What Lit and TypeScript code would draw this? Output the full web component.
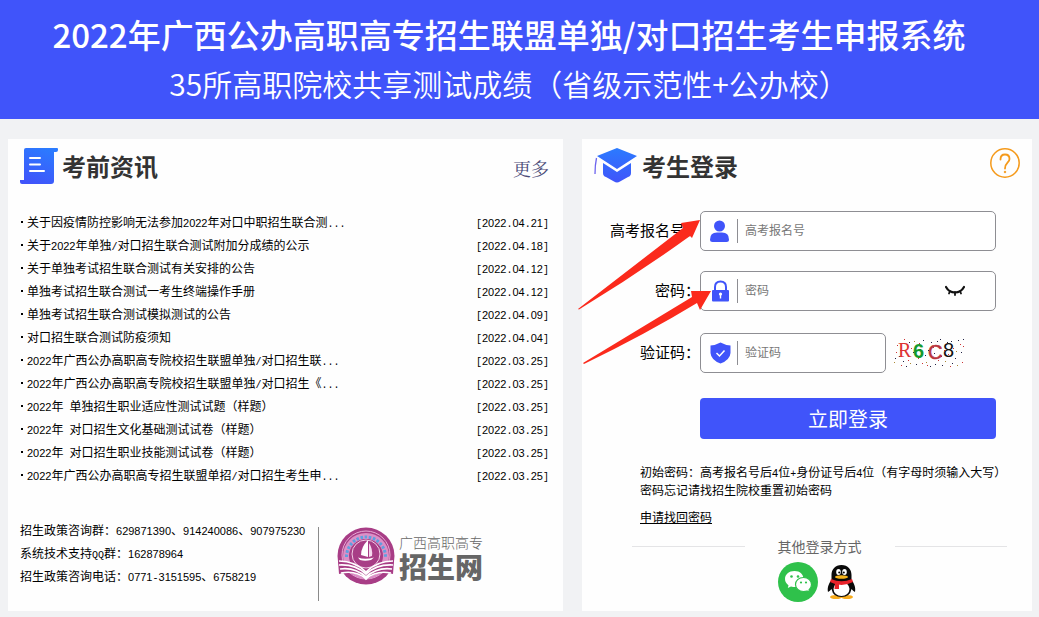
import { LitElement, html, css, svg } from "lit";
import { customElement, property } from "lit/decorators.js";

const NEWS: [string, string][] = [
  ["关于因疫情防控影响无法参加2022年对口中职招生联合测...", "2022.04.21"],
  ["关于2022年单独/对口招生联合测试附加分成绩的公示", "2022.04.18"],
  ["关于单独考试招生联合测试有关安排的公告", "2022.04.12"],
  ["单独考试招生联合测试一考生终端操作手册", "2022.04.12"],
  ["单独考试招生联合测试模拟测试的公告", "2022.04.09"],
  ["对口招生联合测试防疫须知", "2022.04.04"],
  ["2022年广西公办高职高专院校招生联盟单独/对口招生联...", "2022.03.25"],
  ["2022年广西公办高职高专院校招生联盟单独/对口招生《...", "2022.03.25"],
  ["2022年 单独招生职业适应性测试试题（样题）", "2022.03.25"],
  ["2022年 对口招生文化基础测试试卷（样题）", "2022.03.25"],
  ["2022年 对口招生职业技能测试试卷（样题）", "2022.03.25"],
  ["2022年广西公办高职高专招生联盟单招/对口招生考生申...", "2022.03.25"],
];

const CONTACTS = [
  "招生政策咨询群：629871390、914240086、907975230",
  "系统技术支持QQ群：162878964",
  "招生政策咨询电话：0771-3151595、6758219",
];

/* Digits and other Latin runs are set half as wide as the full-width characters. */
const mixed = (text: string) =>
  text
    .split(/([0-9]+|[\x20-\x2f\x3a-\x7e]+)/)
    .filter(Boolean)
    .map((part) =>
      /^[0-9]/.test(part)
        ? html`<span class="digits">${part}</span>`
        : /^[\x20-\x7e]/.test(part)
          ? html`<span class="latin">${part}</span>`
          : part
    );

const shared = css`
  * {
    box-sizing: border-box;
  }
  h1, h2, p, ul {
    margin: 0;
    padding: 0;
  }
  a {
    color: inherit;
    text-decoration: none;
  }
  svg {
    display: block;
    flex: none;
  }
  .latin {
    font-family: "Liberation Mono", monospace;
    font-size: 10px;
    line-height: 1;
    white-space: pre;
  }
  .digits {
    font-family: "Liberation Sans", sans-serif;
    font-size: 11px;
    line-height: 1;
  }
  .head {
    display: flex;
    align-items: flex-start;
    padding-top: 9px;
    height: 56px;
  }
  h2 {
    font-size: 24px;
    line-height: 36px;
    font-weight: 700;
    color: #333;
    flex: 1;
  }
`;

@customElement("news-panel")
class NewsPanel extends LitElement {
  static styles = [
    shared,
    css`
      :host {
        display: block;
        background: #fefefe;
        padding: 0 14px 10px 12px;
      }
      h2 {
        padding-left: 4px;
      }
      .more {
        font-family: "Noto Serif CJK SC", "Noto Sans CJK SC", serif;
        font-size: 18px;
        line-height: 40px;
        color: #4b4b78;
      }
      ul {
        list-style: none;
        padding: 15px 0 0;
      }
      li {
        display: flex;
        justify-content: space-between;
        line-height: 23px;
      }
      .dot {
        display: inline-block;
        width: 2px;
        height: 2px;
        margin: 0 4px 0 1px;
        background: #000;
        vertical-align: 4px;
      }
      .foot {
        display: flex;
        align-items: flex-start;
        padding-top: 32px;
      }
      .contact {
        width: 298px;
        line-height: 23px;
      }
      .logo {
        display: flex;
        border-left: 1px solid #8a8a8a;
        height: 74px;
        margin-top: 9px;
        padding-left: 18px;
        color: #666;
      }
      .words {
        padding: 5px 0 0 4px;
      }
      .small {
        font-size: 14px;
        line-height: 20px;
        font-weight: 300;
      }
      .big {
        font-size: 28px;
        line-height: 28px;
        font-weight: 900;
      }
    `,
  ];

  render() {
    return html`
      <div class="head">
        <svg width="38" height="36" viewBox="0 0 38 36">
          <defs>
            <linearGradient id="g" x1="0.7" y1="0" x2="0.3" y2="1">
              <stop offset="0" stop-color="#2b7bff" /><stop offset="1" stop-color="#4054fa" />
            </linearGradient>
          </defs>
          <path fill="url(#g)" d="M6 0H37Q38 0 38 1V2Q38 4 36 4H34V33Q34 36 31 36H2Q0 36 0 34V32H4V2Q4 0 6 0Z" />
          <path d="M10 10H20M10 16.500H20M10 23H24" stroke="#fff" stroke-width="2" stroke-linecap="round" />
        </svg>
        <h2>考前资讯</h2>
        <a class="more" href="#more">更多</a>
      </div>
      <ul>
        ${NEWS.map(
          ([title, date]) => html`<li>
            <a href="#news"><span class="dot"></span>${mixed(title)}</a>
            <span>${mixed(`[${date}]`)}</span>
          </li>`
        )}
      </ul>
      <div class="foot">
        <div class="contact">${CONTACTS.map((line) => html`<p>${mixed(line)}</p>`)}</div>
        <div class="logo">
          <svg width="58" height="58" viewBox="0 0 58 58" role="img" aria-label="广西高职高专招生网">
            <circle cx="29" cy="29" r="28.500" fill="#a83d86" />
            <circle cx="29" cy="28" r="24" fill="none" stroke="#e7a9d4" stroke-width="1" />
            <circle cx="29" cy="29" r="20" fill="none" stroke="#dc8fc6" stroke-width="6" />
            <path d="M9.500 30A19.500 20 0 0 1 48.500 30" fill="none" stroke="#5f9fe0" stroke-width="3" stroke-dasharray="2.600 1.600" />
            <circle cx="29" cy="27" r="14" fill="#a83d86" stroke="#f2cde6" />
            <path d="M31 13Q24 20 24 28L31 30Z" fill="#fff" />
            <path d="M32 16Q36 22 35 29L32 30Z" fill="#f6d9ee" />
            <path d="M21 30.500Q28 33 37 30.500L34 33Q28 34.500 23 33Z" fill="#fff" />
            <path d="M1 34Q17 33 29 44Q41 33 57 34L56 47Q40 43 29 53Q18 43 2 47Z" fill="#a83d86" />
            <path d="M2 34Q18 34 29 45Q40 34 56 34M2 38Q18 37 29 47Q40 37 56 38M3 42Q18 40 29 50Q40 40 55 42M4 46Q19 43 29 52Q39 43 54 46" fill="none" stroke="#fff" stroke-width="1.700" />
          </svg>
          <div class="words">
            <div class="small">广西高职高专</div>
            <div class="big">招生网</div>
          </div>
        </div>
      </div>
    `;
  }
}

/* Speckles of the verification image: x, y, colour index. */
const NOISE = [
  [3, 7, 0], [1, 20, 1], [0, 24, 2], [6, 12, 0], [9, 23, 1], [12, 28, 1], [15, 4, 1], [17, 10, 0], [19, 14, 1],
  [14, 22, 0], [20, 3, 2], [22, 26, 1], [25, 5, 0], [26, 11, 1], [29, 2, 1], [31, 17, 1], [32, 24, 2], [33, 27, 0],
  [34, 12, 1], [37, 4, 1], [39, 9, 0], [41, 26, 1], [43, 3, 1], [44, 22, 0], [46, 1, 1], [47, 18, 1], [48, 27, 1],
  [50, 12, 0], [51, 23, 2], [53, 4, 1], [54, 16, 0], [57, 3, 1], [58, 25, 1], [59, 10, 0], [61, 20, 1], [63, 27, 2],
  [64, 2, 1], [66, 6, 0], [67, 14, 1], [69, 1, 1], [69, 8, 0], [68, 24, 0], [7, 27, 0], [10, 1, 0], [5, 18, 1],
  [24, 20, 0], [36, 28, 1], [40, 15, 1], [56, 28, 0], [16, 25, 2], [28, 25, 0], [2, 14, 0], [62, 13, 2],
];
const NOISE_COLORS = ["#c33", "#224", "#a83"];

@customElement("login-panel")
class LoginPanel extends LitElement {
  static styles = [
    shared,
    css`
      :host {
        display: block;
        position: relative;
        background: #fefefe;
        padding: 0 12px 9px;
      }
      h2 {
        padding-left: 5px;
      }
      button {
        font: inherit;
        border: 0;
        padding: 0;
        background: none;
        cursor: pointer;
      }
      form {
        padding: 16px 24px 0 16px;
      }
      .row {
        display: flex;
        align-items: center;
        margin-bottom: 20px;
      }
      .row label {
        width: 90px;
        text-align: right;
        font-size: 15px;
        line-height: 22px;
        padding-bottom: 2px;
        flex: none;
      }
      .field {
        display: flex;
        align-items: center;
        flex: 1;
        height: 40px;
        border: 1px solid #8e8e93;
        border-radius: 5px;
        padding: 0 30px 0 8px;
        background: #fff;
      }
      .field input {
        flex: 1;
        min-width: 0;
        height: 24px;
        margin-left: 6px;
        border: 0;
        border-left: 1px solid #8e8e93;
        padding: 0 0 3px 7px;
        outline: 0;
        background: none;
        font: inherit;
      }
      .field input::placeholder {
        color: #777;
        opacity: 1;
      }
      .code {
        margin-top: 22px;
        margin-bottom: 25px;
      }
      .code .field {
        flex: none;
        width: 186px;
        padding-right: 8px;
      }
      .captcha {
        margin-left: 8px;
      }
      .submit {
        display: block;
        width: calc(100% - 90px);
        margin-left: 90px;
        height: 41px;
        border-radius: 4px;
        background: #4054fa;
        color: #fff;
        font-size: 20px;
        line-height: 41px;
        font-weight: 400;
      }
      .hint {
        padding: 24px 0 0 46px;
        line-height: 18px;
      }
      .hint a {
        display: inline-block;
        margin-top: 9px;
        text-decoration: underline;
      }
      .other {
        display: flex;
        align-items: center;
        gap: 33px;
        padding: 10px 13px 0 38px;
        font-size: 14px;
        line-height: 20px;
        color: #666;
      }
      .other::before,
      .other::after {
        content: "";
        flex: 1;
        height: 1px;
        background: #e4e4e6;
      }
      .social {
        display: flex;
        justify-content: center;
        align-items: center;
        gap: 8px;
        padding: 6px 0 0 22px;
      }
      .arrows {
        position: absolute;
        left: -6px;
        top: 78px;
        pointer-events: none;
      }
    `,
  ];

  render() {
    return html`
      <div class="head">
        <svg width="43" height="36" viewBox="0 0 43 36">
          <defs>
            <linearGradient id="g" x1="0.5" y1="0" x2="0.5" y2="1">
              <stop offset="0" stop-color="#2b7bff" /><stop offset="1" stop-color="#4054fa" />
            </linearGradient>
          </defs>
          <path fill="url(#g)" d="M23 0L43 8L23 21L3 8Z M9 15L23 24L37 15V25Q37 28 34 29L26 33.500Q23 35.500 20 33.500L12 29Q9 28 9 25Z" />
          <path d="M2.500 10Q1 17 1 26" fill="none" stroke="#6c63ee" stroke-width="1.300" />
        </svg>
        <h2>考生登录</h2>
        <button type="button" aria-label="帮助">
          <svg width="30" height="30" viewBox="0 0 30 30" fill="none" stroke="#f59a1b">
            <circle cx="15" cy="15" r="14.200" stroke-width="1.500" />
            <path d="M10.500 11.500Q10.500 6.500 15 6.500Q19.500 6.500 19.500 11C19.500 14.500 15 14.500 15 20.500" stroke-width="1.800" stroke-linecap="round" />
            <circle cx="15" cy="24" r="0.800" fill="#f59a1b" />
          </svg>
        </button>
      </div>
      <form @submit=${(e: Event) => e.preventDefault()}>
        <div class="row">
          <label for="number">高考报名号：</label>
          <div class="field">
            <svg width="22" height="24" viewBox="0 0 22 24" fill="#4054fa">
              <circle cx="10.500" cy="7" r="5.500" />
              <path d="M1 20.500Q1 13.500 8 13.500H13Q20 13.500 20 20.500Q20 23 17.500 23H3.500Q1 23 1 20.500Z" />
            </svg>
            <input id="number" type="text" placeholder="高考报名号" />
          </div>
        </div>
        <div class="row">
          <label for="password">密码：</label>
          <div class="field">
            <svg width="22" height="24" viewBox="0 0 22 24">
              <path d="M6 12V8Q6 2.500 11.500 2.500Q17 2.500 17 8V12" fill="none" stroke="#4054fa" stroke-width="2" />
              <rect x="3" y="11" width="17" height="11.500" rx="1" fill="#4054fa" />
              <circle cx="11.500" cy="15" r="1.600" fill="#fff" />
              <path d="M11.500 15V19.500" stroke="#fff" stroke-width="1.400" />
            </svg>
            <input id="password" type="password" placeholder="密码" />
            <button type="button" aria-label="显示密码">
              <svg width="20" height="12" viewBox="0 0 20 12" fill="none" stroke="#111" stroke-width="2.200" stroke-linecap="round">
                <path d="M1 2Q4 7.500 10 7.500Q16 7.500 19 2" />
                <path d="M5 6L4 8.500M10 7V10M15 6L16 8.500" stroke-width="1.800" />
              </svg>
            </button>
          </div>
        </div>
        <div class="row code">
          <label for="code">验证码：</label>
          <div class="field">
            <svg width="22" height="24" viewBox="0 0 22 24">
              <path d="M11.500 1.500Q16 4 21.500 4.500V12Q21 19 11.500 22.500Q2 19 1.500 12V4.500Q7 4 11.500 1.500Z" fill="#4054fa" />
              <path d="M7.500 12L10.500 15L15.500 9.500" fill="none" stroke="#fff" stroke-width="1.500" />
            </svg>
            <input id="code" type="text" placeholder="验证码" />
          </div>
          <button class="captcha" type="button" aria-label="换一张">
            <svg width="72" height="30" viewBox="0 0 72 30">
              ${NOISE.map(([x, y, c]) => svg`<rect x=${x} y=${y} width="1" height="1" fill=${NOISE_COLORS[c]} />`)}
              <text x="4" y="19" font-family="Liberation Serif" font-size="20" fill="#d33">R</text>
              <text x="19" y="20" font-family="Liberation Sans" font-weight="700" font-size="20" fill="#159a2c">6</text>
              <text x="34" y="21" font-family="Liberation Sans" font-size="20" fill="#b8323c" stroke="#b8323c" stroke-width="0.600">C</text>
              <text x="49" y="19" font-family="Liberation Sans" font-size="20" fill="#111">8</text>
            </svg>
          </button>
        </div>
        <button class="submit" type="submit">立即登录</button>
      </form>
      <div class="hint">
        <p>${mixed("初始密码：高考报名号后4位+身份证号后4位（有字母时须输入大写）")}</p>
        <p>密码忘记请找招生院校重置初始密码</p>
        <a href="#recover">申请找回密码</a>
      </div>
      <div class="other">其他登录方式</div>
      <div class="social">
        <button type="button" aria-label="微信登录">
          <svg width="40" height="40" viewBox="0 0 40 40">
            <circle cx="20" cy="20" r="20" fill="#2fc14b" />
            <path d="M16.500 9C11 9 7 12.500 7 17C7 19.700 8.400 21.800 10.500 23.200L9.800 26L13 24.500Q15 25 17.500 25Q25.500 24 25.500 17C25.500 12.500 22 9 16.500 9Z" fill="#fff" />
            <path d="M25.500 15.500C20.500 15.500 17.500 18.800 17.500 22.500C17.500 26.500 21 29.500 25.500 29.500Q27.500 29.500 29 29L31.500 30.500L31 28C32.500 26.700 33.500 25 33.500 22.500C33.500 18.800 30.300 15.500 25.500 15.500Z" fill="#fff" stroke="#2fc14b" stroke-width="1.200" />
            <g fill="#2fc14b"><circle cx="13.500" cy="14.500" r="1.300" /><circle cx="20" cy="14.500" r="1.300" /><circle cx="23" cy="20.500" r="1.100" /><circle cx="28" cy="20.500" r="1.100" /></g>
          </svg>
        </button>
        <button type="button" aria-label="QQ登录">
          <svg width="32" height="36" viewBox="0 0 32 36">
            <ellipse cx="10" cy="33" rx="6" ry="2" fill="#f7ab1c" />
            <ellipse cx="21" cy="33" rx="6" ry="2" fill="#f7ab1c" />
            <path d="M15.500 1C9 1 5.500 5.500 5.500 11V16C3 19 1 23.500 2 28Q4 27 5.500 25Q7 33 15.500 33Q24 33 25.500 25Q27 27 29 28C30 23.500 28 19 25.500 16V11C25.500 5.500 22 1 15.500 1Z" fill="#0a0a0a" />
            <ellipse cx="15.500" cy="25" rx="8" ry="7" fill="#fff" />
            <path d="M5 15Q15.500 19.500 26 15L27 18Q15.500 24 4 18Z" fill="#e8222a" />
            <path d="M9 19H13V25H8.500Z" fill="#e8222a" />
            <ellipse cx="12.500" cy="8" rx="2.300" ry="3" fill="#fff" />
            <ellipse cx="18.500" cy="8" rx="2.300" ry="3" fill="#fff" />
            <circle cx="13.200" cy="8.500" r="1" fill="#000" /><circle cx="17.800" cy="8.500" r="1" fill="#000" />
            <ellipse cx="15.500" cy="13" rx="6.500" ry="1.800" fill="#f7b51c" />
          </svg>
        </button>
      </div>
      <svg class="arrows" width="140" height="150" viewBox="0 0 140 150" fill="#fb2a1c" aria-hidden="true">
        <path d="M2 92L107 11L105 6L124 3L116 21L114 19Q60 58 3 92.500Z" />
        <path d="M7 146L116 80L115 74L135 74L124 93L121 86Q70 117 8 147Z" />
      </svg>
    `;
  }
}

@customElement("app-root")
class AppRoot extends LitElement {
  @property() heading = "2022年广西公办高职高专招生联盟单独/对口招生考生申报系统";
  @property() subheading = "35所高职院校共享测试成绩（省级示范性+公办校）";

  static styles = [
    shared,
    css`
      :host {
        display: block;
        min-height: 100vh;
        background: #f1f2f4;
        color: #000;
        font-family: "Noto Sans CJK SC", sans-serif;
        font-size: 12px;
      }
      header {
        background: #4054fa;
        color: #fff;
        text-align: center;
        padding: 10px 21px 11px 0;
      }
      h1 {
        font-size: 33px;
        line-height: 49px;
        font-weight: 500;
      }
      .sub {
        font-size: 30px;
        line-height: 49px;
        font-weight: 350;
      }
      main {
        display: grid;
        grid-template-columns: 555fr 450fr;
        gap: 19px;
        padding: 20px 7px 6px 8px;
      }
    `,
  ];

  render() {
    return html`
      <header>
        <h1>${this.heading}</h1>
        <p class="sub">${this.subheading}</p>
      </header>
      <main>
        <news-panel></news-panel>
        <login-panel></login-panel>
      </main>
    `;
  }
}
